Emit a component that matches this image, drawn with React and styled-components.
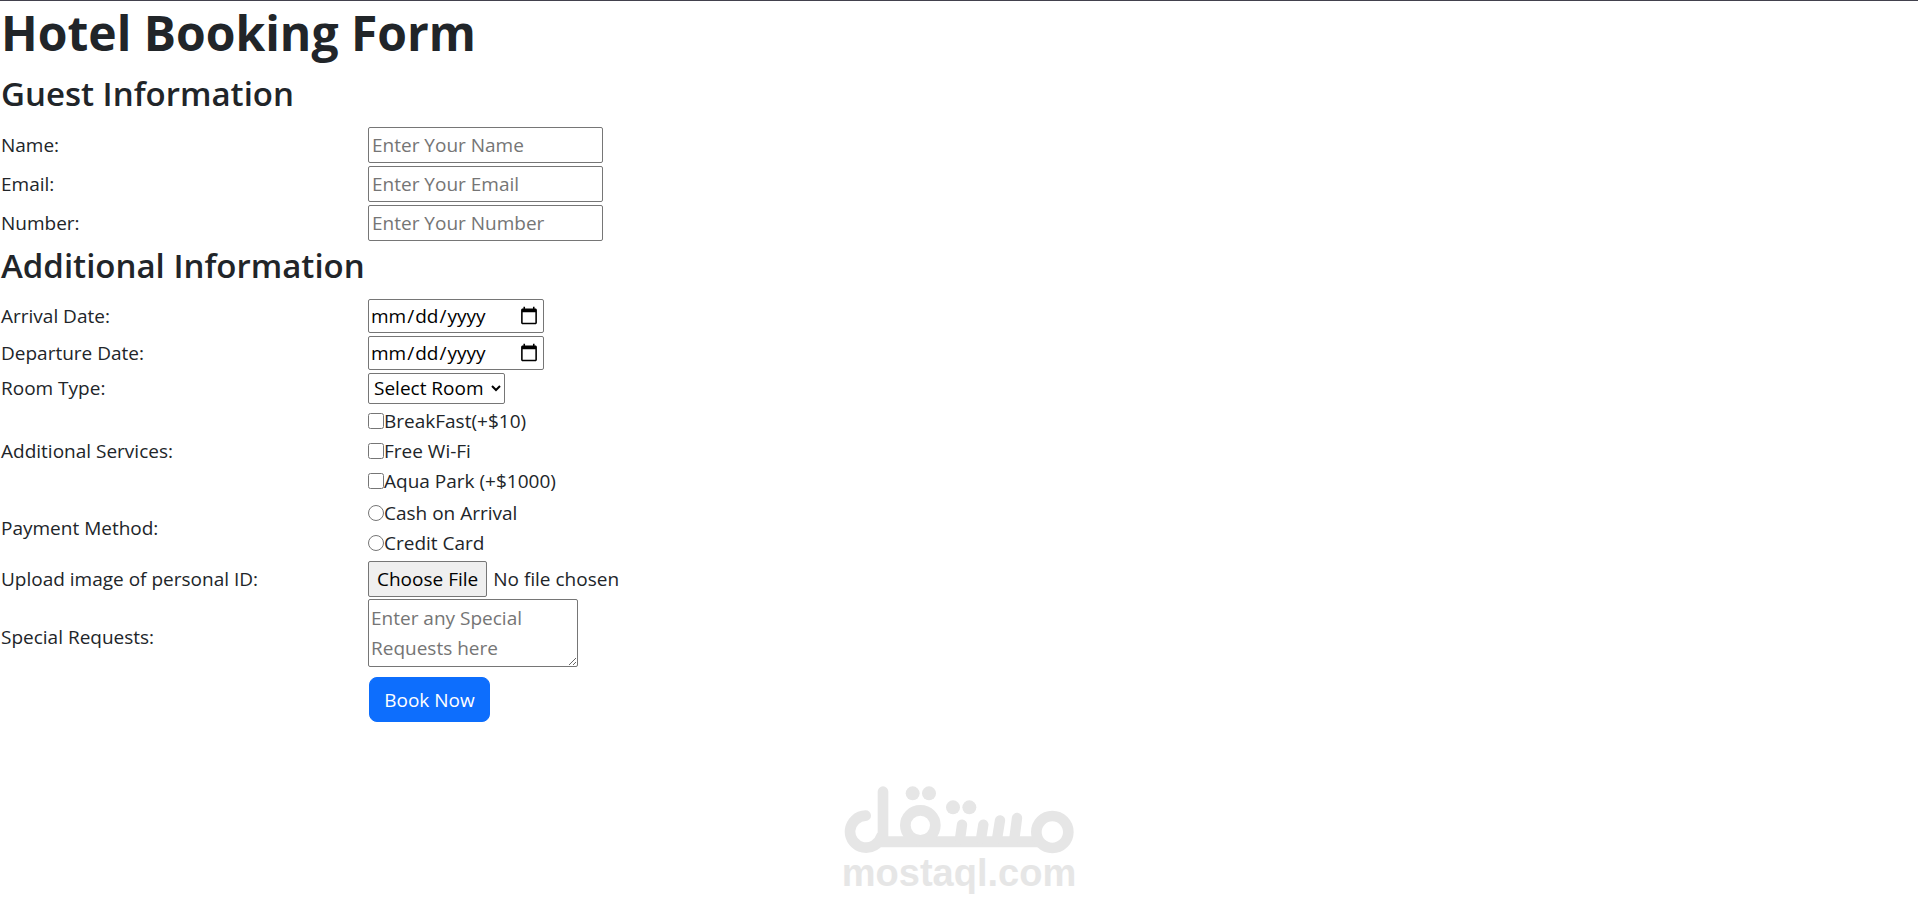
import { useState } from 'react';
import styled, { createGlobalStyle } from 'styled-components';

const guestFields = [
  { id: 'name', label: 'Name:', type: 'text', placeholder: 'Enter Your Name' },
  { id: 'email', label: 'Email:', type: 'email', placeholder: 'Enter Your Email' },
  { id: 'number', label: 'Number:', type: 'tel', placeholder: 'Enter Your Number' },
];

const dateFields = [
  { id: 'arrival', label: 'Arrival Date:' },
  { id: 'departure', label: 'Departure Date:' },
];

const services = [
  { id: 'breakfast', label: 'BreakFast(+$10)' },
  { id: 'wifi', label: 'Free Wi-Fi' },
  { id: 'aqua', label: 'Aqua Park (+$1000)' },
];

const payments = [
  { id: 'cash', label: 'Cash on Arrival' },
  { id: 'credit', label: 'Credit Card' },
];

function Logo() {
  return (
    <Watermark>
      <svg width="230" height="68" viewBox="72 47 690 204" fill="none" stroke="#e6e6e6" strokeWidth="32" aria-hidden="true">
        {/* lam */}
        <path d="M137 136A48 48 0 1 0 184 198L189 214V64" strokeLinecap="round" strokeLinejoin="round" />
        {/* base line */}
        <path d="M178 214.500H664" strokeWidth="33" />
        {/* qaf and meem */}
        <circle cx="301" cy="165" r="45" />
        <circle cx="697" cy="185" r="48" />
        {/* teeth */}
        <path d="M420 206L426 163M483 206L490 163M531 206L540 150M583 206L591 143" strokeWidth="31" strokeLinecap="round" />
        <g fill="#e6e6e6" stroke="none">
          <circle cx="278" cy="69" r="21" />
          <circle cx="327" cy="69" r="21" />
          <circle cx="399" cy="111" r="21" />
          <circle cx="448" cy="111" r="21" />
        </g>
      </svg>
      <span>mostaql.com</span>
    </Watermark>
  );
}

export default function App() {
  const [room, setRoom] = useState('');

  function handleSubmit(event) {
    event.preventDefault();
  }

  return (
    <>
      <GlobalStyle />
      <Page>
        <Title>Hotel Booking Form</Title>
        <Form onSubmit={handleSubmit}>
          <Subtitle>Guest Information</Subtitle>
          {guestFields.map(field => (
            <Row key={field.id} height={37}>
              <label htmlFor={field.id}>{field.label}</label>
              <Input id={field.id} type={field.type} placeholder={field.placeholder} />
            </Row>
          ))}

          <Subtitle>Additional Information</Subtitle>
          {dateFields.map(field => (
            <Row key={field.id} height={35}>
              <label htmlFor={field.id}>{field.label}</label>
              <DateInput id={field.id} type="date" />
            </Row>
          ))}
          <Row height={32}>
            <label htmlFor="room">Room Type:</label>
            <Select id="room" value={room} onChange={event => setRoom(event.target.value)}>
              <option value="">Select Room</option>
              <option value="single">Single</option>
              <option value="double">Double</option>
              <option value="suite">Suite</option>
            </Select>
          </Row>
          <Row role="group" aria-labelledby="services">
            <span id="services">Additional Services:</span>
            <Options>
              {services.map(service => (
                <Option key={service.id}>
                  <input type="checkbox" name={service.id} />
                  {service.label}
                </Option>
              ))}
            </Options>
          </Row>
          <Row role="radiogroup" aria-labelledby="payment">
            <span id="payment">Payment Method:</span>
            <Options>
              {payments.map(payment => (
                <Option key={payment.id}>
                  <input type="radio" name="payment" value={payment.id} />
                  {payment.label}
                </Option>
              ))}
            </Options>
          </Row>
          <Row height={37}>
            <label htmlFor="upload">Upload image of personal ID:</label>
            <FileInput id="upload" type="file" accept="image/*" />
          </Row>
          <Row>
            <label htmlFor="requests">Special Requests:</label>
            <TextArea id="requests" placeholder="Enter any Special Requests here" />
          </Row>
          <Actions>
            <Submit type="submit">Book Now</Submit>
          </Actions>
        </Form>
        <Logo />
      </Page>
    </>
  );
}

const GlobalStyle = createGlobalStyle`
  * {
    box-sizing: border-box;
  }

  body {
    margin: 0;
    background: #fff;
    color: #212529;
    font-family: 'Open Sans', 'Noto Sans', sans-serif;
    font-size: 19px;
    line-height: 30px;
  }

  input, select, textarea, button {
    margin: 0;
    font: inherit;
  }
`;

const Page = styled.main`
  min-height: 100vh;
  display: flex;
  flex-direction: column;
  border-top: 1px solid #42414d;
`;

const Title = styled.h1`
  margin: 0 0 8px;
  padding: 2px 0 0 1px;
  font-size: 48px;
  font-weight: 700;
  line-height: 60px;
`;

const Form = styled.form`
  display: flex;
  flex-direction: column;
  gap: 2px;
  padding-left: 1px;
`;

const Subtitle = styled.h2`
  margin: 0 0 8px;
  font-size: 33px;
  font-weight: 600;
  line-height: 45px;
`;

const Row = styled.div.withConfig({ shouldForwardProp: prop => prop !== 'height' })`
  display: grid;
  grid-template-columns: 367px minmax(0, 1fr);
  align-items: center;
  justify-items: start;
  min-height: ${props => (props.height ? `${props.height}px` : 'auto')};
`;

const Input = styled.input`
  width: 235px;
  height: 36px;
  padding: 1px 3px;
  border: 1px solid #767676;
  border-radius: 2px;
  background: #fff;

  &::placeholder {
    color: #757575;
  }
`;

const DateInput = styled(Input)`
  width: 176px;
  height: 34px;
  padding: 1px 2px 1px 1px;
  color: #000;

  &::-webkit-calendar-picker-indicator {
    width: 20px;
    height: 20px;
    padding: 2px;
  }
`;

const Select = styled.select`
  width: 137px;
  height: 31px;
  padding: 0 1px;
  border: 1px solid #767676;
  border-radius: 2px;
  background: #fff;
  color: #000;
`;

const Options = styled.div`
  display: flex;
  flex-direction: column;
`;

const Option = styled.label`
  display: flex;
  align-items: center;

  input {
    width: 16px;
    height: 16px;
  }
`;

const FileInput = styled.input`
  height: 36px;

  &::file-selector-button {
    height: 36px;
    margin-right: 6px;
    padding: 1px 8px;
    border: 1px solid #767676;
    border-radius: 2px;
    background: #efefef;
    color: #000;
    font: inherit;
  }
`;

const TextArea = styled.textarea`
  width: 210px;
  height: 68px;
  margin-bottom: 8px;
  padding: 3px 2px;
  border: 1px solid #767676;
  border-radius: 2px;
  background: #fff;
  resize: both;

  &::placeholder {
    color: #757575;
  }
`;

const Actions = styled.div`
  padding-left: 368px;
`;

const Submit = styled.button`
  width: 121px;
  height: 45px;
  border: 1px solid #0d6efd;
  border-radius: 8px;
  background: #0d6efd;
  color: #fff;
  cursor: pointer;
`;

const Watermark = styled.div`
  display: flex;
  flex-direction: column;
  align-items: center;
  margin: auto auto 0;
  padding-bottom: 18px;
  color: #e6e6e6;
  font-family: 'Liberation Sans', sans-serif;
  font-size: 38px;
  font-weight: 700;
  line-height: 38px;
`;
